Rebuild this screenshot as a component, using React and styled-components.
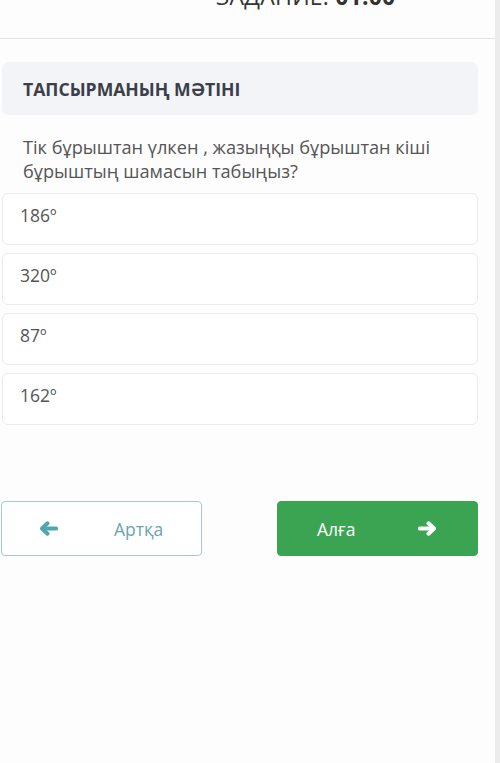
import React from 'react'
import styled, { createGlobalStyle } from 'styled-components'

const GlobalStyle = createGlobalStyle`
  html, body {
    margin: 0;
    padding: 0;
    background: #fdfdfd;
    font-family: "Open Sans", "Noto Sans", sans-serif;
  }
`

const options = ['186º', '320º', '87º', '162º']

// thick fa4-style arrow, pointing left or right
const Arrow = ({ dir }) => (
  <svg width="19" height="15" viewBox="0 0 19 15" fill="none">
    <g transform={dir === 'right' ? 'translate(19 0) scale(-1 1)' : undefined}>
      <path
        d="M8.5 2.3 L3 7.5 L8.5 12.7"
        stroke="currentColor"
        strokeWidth="4"
        strokeLinecap="round"
        strokeLinejoin="round"
      />
      <path d="M4 7.5 H17" stroke="currentColor" strokeWidth="4.2" strokeLinecap="round" />
    </g>
  </svg>
)

function App() {
  return (
    <Page>
      <GlobalStyle />
      <Main>
        <Header>
          <Timer>
            ЗАДАНИЕ: <b>01:00</b>
          </Timer>
        </Header>

        <TitleBox>ТАПСЫРМАНЫҢ МӘТІНІ</TitleBox>

        <Question>
          Тік бұрыштан үлкен , жазыңқы бұрыштан кіші бұрыштың шамасын табыңыз?
        </Question>

        <Options>
          {options.map(o => (
            <Option key={o}>{o}</Option>
          ))}
        </Options>

        <Nav>
          <NavButton>
            <Arrow dir="left" />
            <span>Артқа</span>
          </NavButton>
          <NavButton primary>
            <span>Алға</span>
            <Arrow dir="right" />
          </NavButton>
        </Nav>
      </Main>
      <Track />
    </Page>
  )
}

const Page = styled.div`
  display: flex;
  width: 500px;
  height: 763px;
  overflow: hidden;
`

const Main = styled.div`
  flex: 1;
  display: flex;
  flex-direction: column;
  padding: 0 17px 0 2px;
`

const Track = styled.div`
  width: 5px;
  background: #ececec;
`

const Header = styled.div`
  height: 38px;
  margin: 0 -17px 0 -2px;
  border-bottom: 1px solid #e3e3e3;
  position: relative;
  overflow: hidden;
`

const Timer = styled.div`
  position: absolute;
  left: 216px;
  top: -20px;
  font-size: 23px;
  color: #333;
  letter-spacing: 0.2px;
  b {
    font-weight: 700;
  }
`

const TitleBox = styled.div`
  margin-top: 23px;
  height: 53px;
  display: flex;
  align-items: center;
  padding-left: 21px;
  background: #f3f4f8;
  border-radius: 6px;
  font-size: 17.6px;
  font-weight: 700;
  color: #3b3f48;
`

const Question = styled.p`
  margin: 20px 0 0;
  padding: 0 20px 0 21px;
  font-size: 18.2px;
  line-height: 24px;
  color: #555;
`

const Options = styled.div`
  margin-top: 10px;
  display: flex;
  flex-direction: column;
  gap: 8px;
`

const Option = styled.div`
  height: 52px;
  box-sizing: border-box;
  border: 1px solid #ececec;
  border-radius: 6px;
  background: #fff;
  padding: 9px 17px;
  font-size: 17.5px;
  line-height: 24px;
  color: #555;
`

const Nav = styled.div`
  margin-top: 76px;
  display: flex;
  justify-content: space-between;
  margin-left: -1px;
`

const NavButton = styled.button`
  width: 201px;
  height: 55px;
  box-sizing: border-box;
  border-radius: 4px;
  display: flex;
  align-items: center;
  font-family: inherit;
  font-size: 17.5px;
  padding: 0;
  border: 1px solid ${p => (p.primary ? '#3ba452' : '#a6c9cc')};
  background: ${p => (p.primary ? '#3ba452' : '#fff')};
  color: ${p => (p.primary ? '#fff' : '#6aa6aa')};
  padding-left: ${p => (p.primary ? '39px' : '37px')};
  gap: ${p => (p.primary ? '63px' : '56px')};
  svg {
    color: ${p => (p.primary ? '#fff' : '#4fa7ab')};
  }
`

export default App
